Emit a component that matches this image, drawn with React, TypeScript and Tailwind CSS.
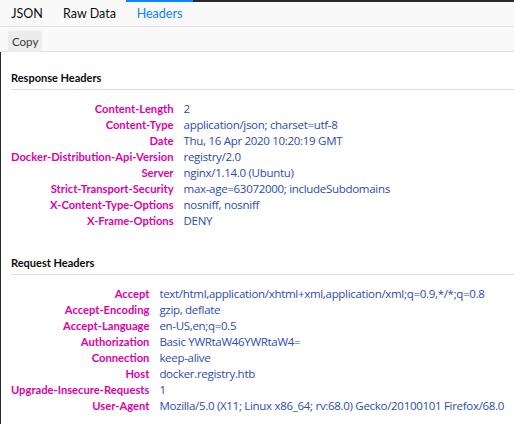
import React from 'react';

type Header = { name: string; value: string };

const responseHeaders: Header[] = [
  { name: 'Content-Length', value: '2' },
  { name: 'Content-Type', value: 'application/json; charset=utf-8' },
  { name: 'Date', value: 'Thu, 16 Apr 2020 10:20:19 GMT' },
  { name: 'Docker-Distribution-Api-Version', value: 'registry/2.0' },
  { name: 'Server', value: 'nginx/1.14.0 (Ubuntu)' },
  { name: 'Strict-Transport-Security', value: 'max-age=63072000; includeSubdomains' },
  { name: 'X-Content-Type-Options', value: 'nosniff, nosniff' },
  { name: 'X-Frame-Options', value: 'DENY' },
];

const requestHeaders: Header[] = [
  { name: 'Accept', value: 'text/html,application/xhtml+xml,application/xml;q=0.9,*/*;q=0.8' },
  { name: 'Accept-Encoding', value: 'gzip, deflate' },
  { name: 'Accept-Language', value: 'en-US,en;q=0.5' },
  { name: 'Authorization', value: 'Basic YWRtaW46YWRtaW4=' },
  { name: 'Connection', value: 'keep-alive' },
  { name: 'Host', value: 'docker.registry.htb' },
  { name: 'Upgrade-Insecure-Requests', value: '1' },
  { name: 'User-Agent', value: 'Mozilla/5.0 (X11; Linux x86_64; rv:68.0) Gecko/20100101 Firefox/68.0' },
];

function HeaderSection({ title, headers }: { title: string; headers: Header[] }) {
  return (
    <div>
      <div className="border-b border-[#dcdcdc] pb-[3px]">
        <h3 className="text-[11px] leading-[16px] font-bold text-[#0c0c0d]">{title}</h3>
      </div>
      <div className="grid grid-cols-[auto_1fr] gap-x-[10px] mt-[11px] leading-[16px]">
        {headers.map((h) => (
          <React.Fragment key={h.name}>
            <div className="text-right text-[11.2px] font-bold text-[#dd00a9] whitespace-nowrap">{h.name}</div>
            <div
              className="text-[11.5px] tracking-[-0.3px] text-[#2b4cb4] whitespace-nowrap"
              style={{ fontFamily: '"Open Sans", sans-serif' }}
            >
              {h.value}
            </div>
          </React.Fragment>
        ))}
      </div>
    </div>
  );
}

export default function App() {
  return (
    <div className="w-[514px] h-[424px] bg-white overflow-hidden" style={{ fontFamily: 'Lato, "Open Sans", sans-serif' }}>
      {/* tab bar */}
      <div className="flex h-[27px] bg-[#f9f9f9] border-b border-[#e0e0e0] pl-px">
        <div className="w-[52px] pt-[4px] text-center text-[12.5px] leading-[20px] text-[#0c0c0d]">JSON</div>
        <div className="w-[73px] pt-[4px] text-center text-[12.5px] leading-[20px] text-[#0c0c0d] whitespace-nowrap">Raw Data</div>
        <div className="w-[67px] pt-[2px] text-center border-t-2 border-[#0a84ff] text-[12.5px] leading-[20px] text-[#0a84ff]">Headers</div>
        <div className="flex-1 border-t-2 border-[#2a2a2e]" />
      </div>

      {/* toolbar */}
      <div className="h-[25px] bg-[#f9f9f9] border-b border-[#e0e0e0] pl-[8px] pt-px">
        <button className="h-[21px] px-[4px] bg-[#ececec] text-[11.5px] leading-[21px] text-[#38383d] rounded-[2px]">Copy</button>
      </div>

      {/* content */}
      <div className="h-full border-l border-[#2a2a2e] pl-[10px] pt-[18px]">
        <HeaderSection title="Response Headers" headers={responseHeaders} />
        <div className="h-[26px]" />
        <HeaderSection title="Request Headers" headers={requestHeaders} />
      </div>
    </div>
  );
}
